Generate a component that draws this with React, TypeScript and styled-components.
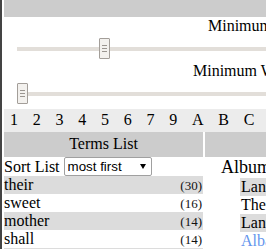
import React from "react";
import styled, { createGlobalStyle } from "styled-components";

const GlobalStyle = createGlobalStyle`
  html, body {
    margin: 0;
    padding: 0;
    overflow: hidden;
    background: #fff;
  }
  body {
    font-family: "Liberation Serif", "Times New Roman", serif;
    font-size: 16px;
    line-height: normal;
    color: #000;
  }
`;

const Page = styled.div`
  width: 520px;
  min-height: 249px;
  border-left: 2px solid #444;
  padding-left: 2px;
`;

const TopBar = styled.div`
  height: 17px;
  background: #ccc;
`;

const SliderBlock = styled.div<{ $after: number }>`
  padding-bottom: ${p => p.$after}px;
`;

const SliderLabel = styled.div<{ $indent: number }>`
  padding-left: ${p => p.$indent}px;
  white-space: nowrap;
`;

const SliderRow = styled.div`
  display: flex;
  align-items: center;
  height: 21px;
  margin: 3px 30px 0 13px;
`;

const Rail = styled.div`
  position: relative;
  flex: 1;
  height: 4px;
  background: #e2ded9;
`;

const Thumb = styled.span`
  position: absolute;
  top: -8.5px;
  width: 11px;
  height: 21px;
  box-sizing: border-box;
  border: 1px solid #a39e99;
  border-radius: 1px;
  background: #f3f1ee;
  display: flex;
  justify-content: center;
  padding-top: 6px;

  &::before {
    content: "";
    width: 5px;
    height: 1px;
    background: #9a9590;
    box-shadow: 0 3px #9a9590, 0 6px #9a9590;
  }
`;

const IndexBar = styled.div`
  display: flex;
  gap: 14.75px;
  height: 23px;
  box-sizing: border-box;
  padding: 2px 0 0 6px;
  background: #ececec;
  white-space: nowrap;
`;

const Columns = styled.div`
  display: grid;
  grid-template-columns: 199px 1fr;
  column-gap: 2px;
`;

const ColumnHeader = styled.div`
  height: 25px;
  box-sizing: border-box;
  padding-top: 3px;
  background: #ccc;
  text-align: center;
  white-space: nowrap;
`;

const SortRow = styled.div`
  display: flex;
  align-items: center;
  gap: 4px;
  height: 19px;
`;

const SelectWrap = styled.span`
  position: relative;
  display: inline-flex;

  &::after {
    content: "";
    position: absolute;
    right: 6px;
    top: 6px;
    border-left: 3.5px solid transparent;
    border-right: 3.5px solid transparent;
    border-top: 5px solid #000;
    pointer-events: none;
  }
`;

const Select = styled.select`
  appearance: none;
  width: 88px;
  height: 19px;
  box-sizing: border-box;
  margin: -1px 0 0 0;
  padding: 0 0 0 3px;
  border: 1px solid #a0a0a0;
  border-radius: 2px;
  background: #fff;
  font-family: "Liberation Sans", Arial, sans-serif;
  font-size: 13.33px;
  color: #000;
`;

const TermRow = styled.div<{ $shade: boolean }>`
  display: flex;
  justify-content: space-between;
  align-items: baseline;
  padding-right: 1px;
  background: ${p => (p.$shade ? "#dcdcdc" : "#fff")};
`;

const Count = styled.span`
  font-size: 13px;
  color: #111;
`;

const AlbumTitle = styled.h3`
  margin: 0;
  padding-left: 16px;
  font-size: 18px;
  font-weight: normal;
  white-space: nowrap;
`;

const AlbumItem = styled.div<{ $shade: boolean }>`
  margin-left: 35px;
  padding-left: 1px;
  white-space: nowrap;
  background: ${p => (p.$shade ? "#dcdcdc" : "#fff")};
`;

const AlbumLink = styled.a`
  color: #6495ed;
  text-decoration: none;
`;

const sliders = [
  { label: "Minimum Frequency", indent: 204, value: 6, min: 1, max: 30, after: 3 },
  { label: "Minimum Word Length", indent: 189, value: 1, min: 1, max: 20, after: 5 },
];

const indexKeys = ["1", "2", "3", "4", "5", "6", "7", "9", "A", "B", "C", "D", "E", "F", "G", "H", "I", "J", "K"];

const terms = [
  { word: "their", count: 30 },
  { word: "sweet", count: 16 },
  { word: "mother", count: 14 },
  { word: "shall", count: 14 },
  { word: "heart", count: 12 },
];

const albums = ["Landscape", "The Mother", "Lanterns", "Albatross"];

export default function App() {
  return (
    <>
      <GlobalStyle />
      <Page>
        <TopBar />
        {sliders.map(s => (
          <SliderBlock key={s.label} $after={s.after}>
            <SliderLabel $indent={s.indent}>{s.label}</SliderLabel>
            <SliderRow>
              <Rail>
                <Thumb style={{ left: `${((s.value - s.min) / (s.max - s.min)) * 100}%` }} />
              </Rail>
            </SliderRow>
          </SliderBlock>
        ))}
        <IndexBar>
          {indexKeys.map(k => (
            <span key={k}>{k}</span>
          ))}
        </IndexBar>
        <Columns>
          <div>
            <ColumnHeader>Terms List</ColumnHeader>
            <SortRow>
              <span>Sort List</span>
              <SelectWrap>
                <Select defaultValue="most">
                  <option value="most">most first</option>
                  <option value="least">least first</option>
                  <option value="alpha">a to z</option>
                </Select>
              </SelectWrap>
            </SortRow>
            {terms.map((t, i) => (
              <TermRow key={t.word} $shade={i % 2 === 0}>
                <span>{t.word}</span>
                <Count>({t.count})</Count>
              </TermRow>
            ))}
          </div>
          <div>
            <ColumnHeader>Albums</ColumnHeader>
            <AlbumTitle>Albums</AlbumTitle>
            {albums.map((a, i) => (
              <AlbumItem key={a} $shade={i % 2 === 0}>
                {i === albums.length - 1 ? <AlbumLink href="#">{a}</AlbumLink> : a}
              </AlbumItem>
            ))}
          </div>
        </Columns>
      </Page>
    </>
  );
}
